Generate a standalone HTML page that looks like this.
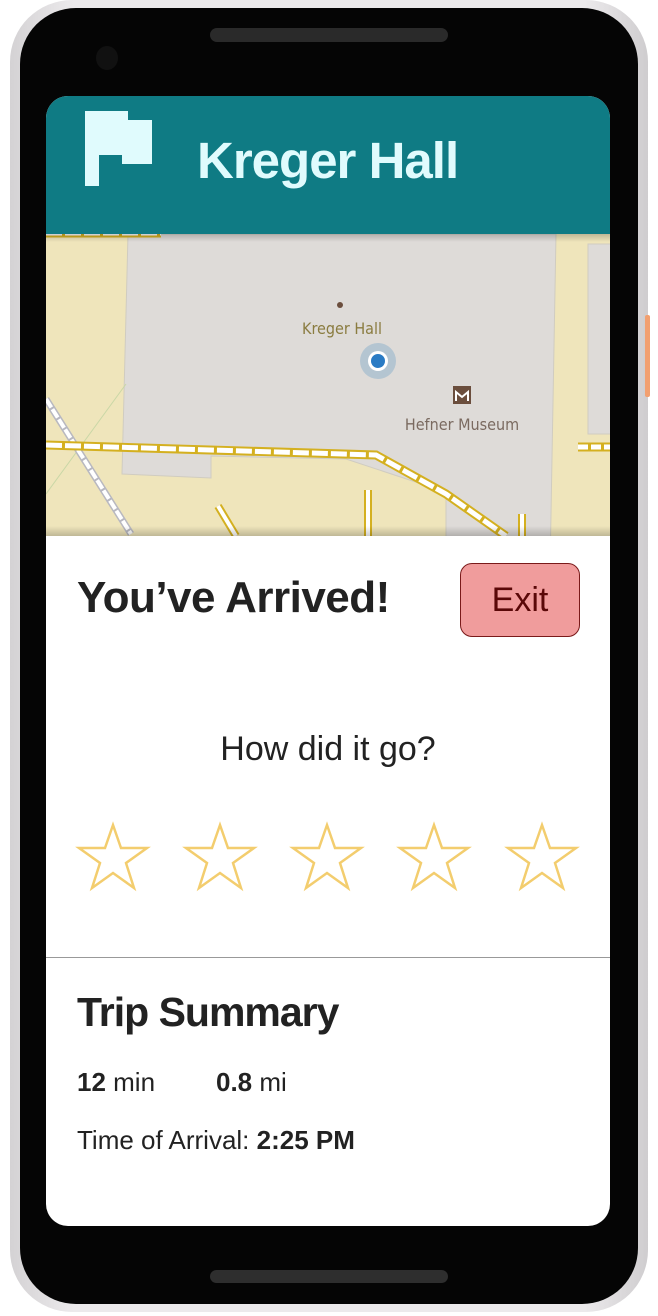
<!DOCTYPE html>
<html><head><style>
*{margin:0;padding:0;box-sizing:border-box}
body{width:658px;height:1316px;background:#fff;position:relative;overflow:hidden;font-family:"Liberation Sans",sans-serif}
.outer{position:absolute;left:10px;top:0;width:638px;height:1312px;border-radius:62px;background:linear-gradient(90deg,#d4d2d4,#eceaec 10%,#eceaec 90%,#cfcdcf)}
.inner{position:absolute;left:20px;top:8px;width:618px;height:1296px;border-radius:56px;background:#050505}
.screen{position:absolute;left:46px;top:96px;width:564px;height:1130px;border-radius:22px;background:#fff;overflow:hidden}
.hdr{position:absolute;left:0;top:0;width:564px;height:138px;background:#0f7b84}
.map{position:absolute;left:0;top:138px;width:564px;height:302px;background:#efe5bb;overflow:hidden}
.t{position:absolute;color:#222;white-space:nowrap}
</style></head><body>
<div class="outer"></div>
<div class="inner"></div>
<div style="position:absolute;left:210px;top:28px;width:238px;height:14px;border-radius:7px;background:#2a2a2a"></div>
<div style="position:absolute;left:96px;top:46px;width:22px;height:24px;border-radius:50%;background:#111"></div>
<div style="position:absolute;left:210px;top:1270px;width:238px;height:13px;border-radius:7px;background:#2e2e2e"></div>
<div style="position:absolute;left:645px;top:315px;width:5px;height:82px;background:#f2a070;border-radius:2px"></div>
<div class="screen">
 <div class="hdr">
  <svg style="position:absolute;left:39px;top:15px" width="68" height="76" viewBox="0 0 68 76"><path d="M0 0H43V9H67V53H37V44H14V75H0Z" fill="#e0fbfd"/></svg>
  <div class="t" style="left:151px;top:35px;font-size:51px;font-weight:bold;color:#e0fbfd;letter-spacing:-1px">Kreger Hall</div>
 </div>
 <div class="map">
  <svg width="564" height="302" viewBox="0 0 564 302" style="position:absolute;left:0;top:0">
   <polygon points="82,0 510,0 504,336 400,336 400,258 300,225 165,222 165,244 76,240" fill="#dedbd8" stroke="#d0ccc0"/>
   <rect x="542" y="10" width="24" height="190" fill="#dedbd8" stroke="#d0ccc0"/>
   <line x1="0" y1="260" x2="80" y2="150" stroke="#c9d7a6"/>
   <line x1="0" y1="165" x2="85" y2="300" stroke="#b8b8c0" stroke-width="7"/>
   <line x1="0" y1="165" x2="85" y2="300" stroke="#fff" stroke-width="4" stroke-dasharray="10 2"/>
   <path d="M0 211 L330 221 L400 260 L460 302" fill="none" stroke="#d4b020" stroke-width="9"/>
   <path d="M0 211 L330 221 L400 260 L460 302" fill="none" stroke="#fff" stroke-width="5" stroke-dasharray="16 3"/>
   <path d="M0 0 H115" stroke="#d4b020" stroke-width="7"/><path d="M0 0 H115" stroke="#fff" stroke-width="3" stroke-dasharray="16 3"/>
   <path d="M532 213 H564" stroke="#d4b020" stroke-width="9"/><path d="M532 213 H564" stroke="#fff" stroke-width="5" stroke-dasharray="10 3"/>
   <path d="M322 256 V302 M476 280 V302" stroke="#d4b020" stroke-width="8"/><path d="M322 256 V302 M476 280 V302" stroke="#fff" stroke-width="4"/>
   <path d="M172 272 L190 302" stroke="#d4b020" stroke-width="8"/><path d="M172 272 L190 302" stroke="#fff" stroke-width="4"/>
   <circle cx="294" cy="71" r="3" fill="#6b4e3d"/>
   <circle cx="332" cy="127" r="18" fill="#a9bfd0" opacity=".8"/>
   <circle cx="332" cy="127" r="10" fill="#fff"/><circle cx="332" cy="127" r="7" fill="#2a7bc4"/>
   <rect x="407" y="152" width="18" height="18" fill="#6b4e3d"/><path d="M410 167V158L416 163L422 158V167" stroke="#fff" stroke-width="2" fill="none"/>
   <text x="296" y="100" font-family="DejaVu Sans Condensed,DejaVu Sans,sans-serif" font-size="16" fill="#8a7c40" text-anchor="middle">Kreger Hall</text>
   <text x="416" y="196" font-family="DejaVu Sans Condensed,DejaVu Sans,sans-serif" font-size="16" fill="#7a6a60" text-anchor="middle">Hefner Museum</text>
  </svg>
  <div style="position:absolute;left:0;top:0;width:564px;height:8px;background:linear-gradient(#0003,#0000)"></div>
  <div style="position:absolute;left:0;bottom:0;width:564px;height:10px;background:linear-gradient(#0000,#0003)"></div>
 </div>
 <div class="t" style="left:31px;top:477px;font-size:44px;font-weight:bold;letter-spacing:-0.5px">You’ve Arrived!</div>
 <div style="position:absolute;left:414px;top:467px;width:120px;height:74px;border-radius:12px;background:#f09c9c;border:1px solid #7a1a1a;color:#5a0808;font-size:34px;text-align:center;line-height:72px">Exit</div>
 <div class="t" style="left:0;width:564px;text-align:center;top:634px;font-size:34px">How did it go?</div>
 <svg style="position:absolute;left:0;top:722px" width="564" height="80" viewBox="0 0 564 80">
  <g fill="none" stroke="#f3cd6e" stroke-width="2.5">
   <polygon id="s" points="67,7 75,30 101,30 80,45 88,70 67,55 46,70 54,45 33,30 59,30"/>
   <use href="#s" x="107"/><use href="#s" x="214"/><use href="#s" x="321"/><use href="#s" x="429"/>
  </g>
 </svg>
 <div style="position:absolute;left:0;top:861px;width:564px;height:1px;background:#999"></div>
 <div class="t" style="left:31px;top:893px;font-size:41px;font-weight:bold;letter-spacing:-1px">Trip Summary</div>
 <div class="t" style="left:31px;top:971px;font-size:26px"><b>12</b> min</div>
 <div class="t" style="left:170px;top:971px;font-size:26px"><b>0.8</b> mi</div>
 <div class="t" style="left:31px;top:1029px;font-size:26px">Time of Arrival: <b>2:25 PM</b></div>
</div>
</body></html>
